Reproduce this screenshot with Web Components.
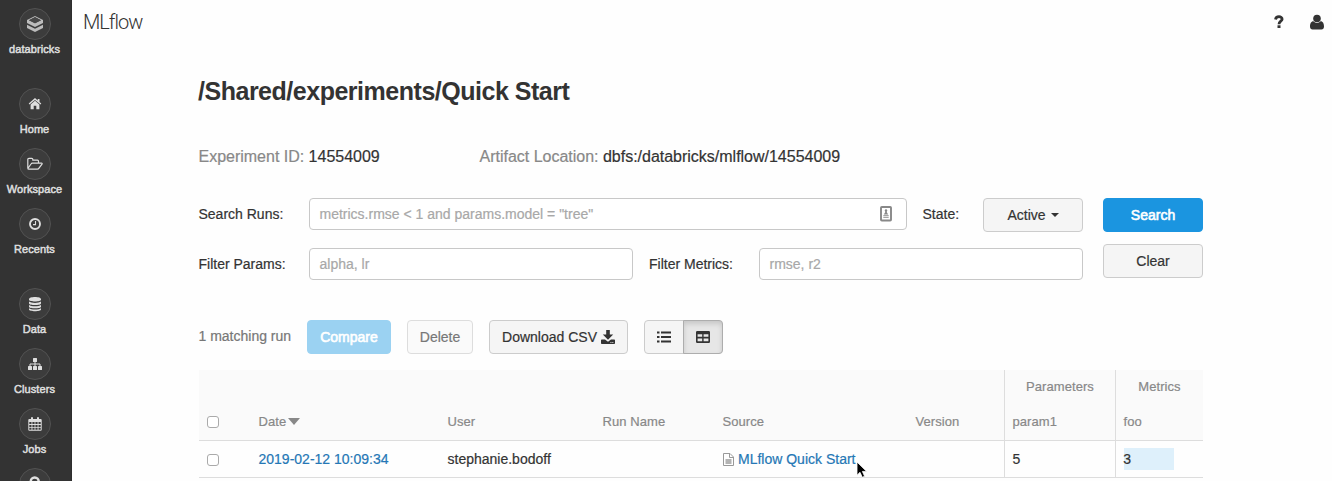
<!DOCTYPE html>
<html lang="en">
<head>
<meta charset="utf-8">
<title>MLflow</title>
<style>
html, body { margin: 0; height: 481px; overflow: hidden; background: #fefefe; }
body { font-family: "Liberation Sans", Arial, sans-serif; font-size: 14px; color: #333; -webkit-text-stroke-width: .2px; }
</style>
</head>
<body>
<ml-app></ml-app>
<script>
const icons = {
  bricks: ['0 0 18 18', '<path fill="#bcbcbc" fill-rule="evenodd" d="M9 1 17 5.1V8.1L9 12.1 1 8.1V5.1ZM9 2.2 3 5.3 9 8.3 15 5.3Z"/><path fill="#bcbcbc" d="M1 9.7 9 13.7 17 9.7V12.9L9 17 1 12.9Z"/><path fill="#484848" d="M9 2.1 3 5.200 9 8.200 15 5.200Z"/>'],
  home: ['0 0 14 14', '<path d="M7 1 .7 6.6l.8.9L7 2.9l5.5 4.6.8-.9L11.5 5V1.9H9.7v1.5Z"/><path d="M2.6 7.5 7 3.8l4.4 3.7v4.7H8.3V8.700H5.700v3.500H2.600Z"/>'],
  folder: ['0 0 18 14', '<path fill="none" stroke="currentColor" stroke-width="1.2" stroke-linejoin="round" d="M1.8 10.9V2.4q0-1.1 1.1-1.1h2.9q1 0 1 1v.9h4.7q1 0 1 1v1.6M1.9 11.5 5 7q.5-.8 1.4-.8h9.1q1 0 .5.9L13 11.2q-.6.9-1.5.9H2.6q-1 0-.7-.7Z"/>'],
  clock: ['0 0 14 14', '<circle cx="7" cy="7" r="5" fill="none" stroke="currentColor" stroke-width="1.9"/><path fill="none" stroke="currentColor" stroke-width="1.1" d="M7.5 4v3.600H5"/>'],
  data: ['0 0 14 16', '<path d="M1 3.1C1 .2 13 .2 13 3.1v1C13 6 1 6 1 4.1ZM1 5.6c2 1.7 10 1.7 12 0v1.9c0 2-12 2-12 0ZM1 9c2 1.7 10 1.7 12 0v1.8c0 2-12 2-12 0ZM1 12.2c2 1.7 10 1.7 12 0v1.2c0 2.3-12 2.3-12 0Z"/>'],
  clusters: ['0 0 16 14', '<rect x="6" y="1" width="4" height="4" rx=".5"/><rect x="1" y="9" width="4" height="4" rx=".5"/><rect x="6" y="9" width="4" height="4" rx=".5"/><rect x="11" y="9" width="4" height="4" rx=".5"/><path fill="none" stroke="currentColor" d="M8 5v4M3 9V7h10v2"/>'],
  calendar: ['0 0 16 16', '<path fill-rule="evenodd" d="M2.3 3H4v-1q0-1 1-1t1 1v1h4v-1q0-1 1-1t1 1v1h1.7q1 0 1 1v9.7q0 1-1 1H2.3q-1 0-1-1V4q0-1 1-1ZM2.3 6v2h2.2V6Zm3.1 0v2h2.2V6Zm3 0v2h2.2V6Zm3.1 0v2h2.2V6ZM2.3 8.9v2h2.2v-2Zm3.1 0v2h2.2v-2Zm3 0v2h2.2v-2Zm3.1 0v2h2.2v-2ZM2.3 11.8v2h2.2v-2Zm3.1 0v2h2.2v-2Zm3 0v2h2.2v-2Zm3.1 0v2h2.2v-2Z"/>'],
  search: ['0 0 16 16', '<circle cx="7.700" cy="5.500" r="4" fill="none" stroke="currentColor" stroke-width="2.4"/><path stroke="currentColor" stroke-width="2.4" d="m11 9 4 4"/>'],
  question: ['0 0 10 14', '<path fill="none" stroke="currentColor" stroke-width="2.8" d="M1.5 4.5C2 .8 8.100.9 8.100 4.200 8.100 6.300 5 6.200 5 9.200"/><rect x="3.500" y="10.300" width="3" height="2.700"/>'],
  user: ['0 0 14 16', '<circle cx="7" cy="4.500" r="3.800"/><path d="M3.400 7.200C1 7.200 0 9.700 0 12.600 0 14.500 1 15.500 2.500 15.500h9c1.500 0 2.500-1 2.500-2.900 0-2.900-1-5.400-3.400-5.400Q9 9 7 9T3.400 7.200Z"/>'],
  contact: ['0 0 12 16', '<rect x="1" y="1" width="10" height="13.500" rx=".8" fill="none" stroke="currentColor" stroke-width="1.9"/><circle cx="6" cy="4.400" r="1.200"/><path d="M5.200 5h1.600v1.300L8.200 8.500H3.800l1.400-2.200ZM3.300 9.300h5.400v.9H3.300Zm0 1.600h5.400v.9H3.300Z"/>'],
  caret: ['0 0 8 4', '<path d="M0 0h8L4 4Z"/>'],
  sort: ['0 0 12 7', '<path d="M0 0h12L6 7Z"/>'],
  download: ['0 0 14 14', '<path d="M5.200 0h3.600v4.600h3.400L7 9.800 1.800 4.600h3.400Z"/><path fill-rule="evenodd" d="M.8 9.500H4l3 2.300L10 9.500h3.200q.8 0 .8.800v2.900q0 .8-.8.800H.800q-.8 0-.8-.8V10.300Q0 9.500.8 9.500ZM9.500 12v.9h.9V12Zm1.900 0v.9h.9V12Z"/>'],
  list: ['0 0 14 12', '<path d="M0 .5h2.500v2H0Zm4 0h10v2H4ZM0 5h2.500v2H0Zm4 0h10v2H4ZM0 9.500h2.500v2H0Zm4 0h10v2H4Z"/>'],
  table: ['0 0 14 12', '<path fill-rule="evenodd" d="M1.200 0h11.600Q14 0 14 1.200v9.600q0 1.200-1.200 1.200H1.200Q0 12 0 10.800V1.200Q0 0 1.200 0ZM1.600 3.200v2.600h4.600V3.200Zm6 0v2.600h4.800V3.200Zm-6 4.200v2.800h4.600V7.400Zm6 0v2.800h4.800V7.400Z"/>'],
  file: ['0 0 11 13', '<path fill="none" stroke="currentColor" d="M1 .5h6L10.500 4v8.500H.5V.5ZM6.500.5v4h4"/><path d="M2.500 6h6v5h-6Z" opacity=".75"/>'],
  cursor: ['0 0 12 18', '<path fill="#000" stroke="#fff" stroke-width=".8" d="M1 1v13.200l3-2.900 2.300 5 2.300-1-2.200-4.900h4.200Z"/>']
};

const define = (name, css, html) => customElements.define(name, class extends HTMLElement {
  constructor() {
    super();
    const t = document.createElement('template');
    t.innerHTML = `<style>*{box-sizing:border-box}${css}</style>${html}`;
    this.attachShadow({ mode: 'open' }).append(t.content.cloneNode(true));
  }
});

customElements.define('ui-icon', class extends HTMLElement {
  connectedCallback() {
    if (this.shadowRoot) return;
    const [box, body] = icons[this.getAttribute('name')];
    const [, , vw, vh] = box.split(' ');
    const w = this.getAttribute('w') || vw, h = this.getAttribute('h') || vh;
    this.attachShadow({ mode: 'open' }).innerHTML =
      `<style>:host{display:inline-block;flex:none;width:${w}px;height:${h}px}svg{display:block;width:100%;height:100%}</style>
       <svg viewBox="${box}" fill="currentColor" preserveAspectRatio="none">${body}</svg>`;
  }
});

define('nav-item', `
  :host{display:flex;flex-direction:column;align-items:center;height:60px;flex:none;color:#dedede}
  .disc{display:grid;place-items:center;width:32px;height:32px;border-radius:50%;border:1px solid #525252;background:#3c3c3c}
  .label{font-size:11px;line-height:14px;margin-top:2px;white-space:nowrap;-webkit-text-stroke:.5px #dedede;letter-spacing:.08px}`,
  `<div class="disc"><slot name="icon"></slot></div><div class="label"><slot></slot></div>`);

define('side-nav', `
  :host{display:flex;flex-direction:column;gap:20px;width:72px;height:481px;padding:8px 2px 0 0;background:#333;overflow:hidden;border-right:1px solid #2d2d2d}
  section{flex:none}`,
  `<section><nav-item><ui-icon slot="icon" name="bricks"></ui-icon>databricks</nav-item></section>
   <section>
    <nav-item><ui-icon slot="icon" name="home"></ui-icon>Home</nav-item>
    <nav-item><ui-icon slot="icon" name="folder"></ui-icon>Workspace</nav-item>
    <nav-item><ui-icon slot="icon" name="clock"></ui-icon>Recents</nav-item>
   </section>
   <section>
    <nav-item><ui-icon slot="icon" name="data"></ui-icon>Data</nav-item>
    <nav-item><ui-icon slot="icon" name="clusters"></ui-icon>Clusters</nav-item>
    <nav-item><ui-icon slot="icon" name="calendar"></ui-icon>Jobs</nav-item>
    <nav-item><ui-icon slot="icon" name="search"></ui-icon></nav-item>
   </section>`);

define('top-bar', `
  :host{display:flex;align-items:center;height:44px;padding:0 8px 0 11px;color:#333}
  .brand{font:300 20px/24px Roboto,"Liberation Sans",sans-serif;letter-spacing:-1px;-webkit-text-stroke-width:0;flex:1;color:#333}
  .actions{display:flex;align-items:center;gap:26px}`,
  `<div class="brand">MLflow</div><div class="actions"><ui-icon name="question"></ui-icon><ui-icon name="user"></ui-icon></div>`);

define('ui-button', `
  :host{display:flex;align-items:center;justify-content:center;gap:5px;height:34px;width:100px;border:1px solid #ccc;border-radius:4px;background:#f5f5f5;color:#333;line-height:20px;white-space:nowrap;flex:none}
  :host([primary]){background:#1b95e0;border-color:#1b95e0;color:#fff;-webkit-text-stroke:.6px #fff}
  :host([disabled]){border-color:#ddd;background:#fafafa;color:#777}
  :host([primary][disabled]){background:#9bd2f2;border-color:#9bd2f2;color:#fff}`,
  `<slot></slot>`);

define('text-field', `
  :host{display:flex;align-items:center;justify-content:space-between;height:32px;padding:0 14px 0 9.5px;border:1px solid #c8c8c8;border-radius:4px;background:#fff;color:#a8a8a8;line-height:20px;flex:none;white-space:nowrap}
  ::slotted(ui-icon){color:#888}`,
  `<slot></slot><slot name="end"></slot>`);

define('view-toggle', `
  :host{display:flex;width:79px;height:34px;border:1px solid #ccc;border-radius:4px;background:#f5f5f5}
  span{display:grid;place-items:center;width:39px;padding-right:1px;color:#333;flex:none}
  .on{width:40px;margin:-1px;padding:0;border:1px solid #adadad;border-radius:0 4px 4px 0;background:#e6e6e6;box-shadow:inset 0 3px 5px #0002;height:34px}`,
  `<span><ui-icon name="list"></ui-icon></span><span class="on"><ui-icon name="table"></ui-icon></span>`);

define('check-box', `:host{display:block;width:12px;height:12px;border:1px solid #aaa;border-radius:3px;background:#fff}`, ``);

define('experiment-info', `
  :host{display:block}
  h1{font-size:25px;line-height:30px;font-weight:700;margin:0 0 0 -1px;letter-spacing:-.48px;-webkit-text-stroke-width:0;white-space:nowrap}
  .meta{display:grid;grid-template-columns:281px 1fr;font-size:16px;line-height:20px;margin:41px 0 0 -.5px;white-space:nowrap;letter-spacing:-.01px}
  b{font-weight:400;color:#888}`,
  `<h1>/Shared/experiments/Quick Start</h1>
   <div class="meta"><div><b>Experiment ID:</b> 14554009</div><div><b>Artifact Location:</b> dbfs:/databricks/mlflow/14554009</div></div>`);

define('search-form', `
  :host{display:flex;gap:20px;margin-top:31px}
  .rows{width:884px;display:flex;flex-direction:column;gap:16px}
  .row{display:flex;height:34px}
  label{line-height:32px;flex:none;white-space:nowrap;text-indent:-.5px}
  .a{width:110px}.s{width:60px;margin-left:16px}.m{width:110px;margin-left:16px;text-indent:0}
  .q{width:598px}.f{width:324px}
  .buttons{display:flex;flex-direction:column;gap:12px}`,
  `<div class="rows">
    <div class="row"><label class="a">Search Runs:</label><text-field class="q">metrics.rmse &lt; 1 and params.model = "tree"<ui-icon slot="end" name="contact"></ui-icon></text-field><label class="s">State:</label><ui-button>Active <ui-icon name="caret"></ui-icon></ui-button></div>
    <div class="row"><label class="a">Filter Params:</label><text-field class="f">alpha, lr</text-field><label class="m">Filter Metrics:</label><text-field class="f">rmse, r2</text-field></div>
   </div>
   <div class="buttons"><ui-button primary>Search</ui-button><ui-button>Clear</ui-button></div>`);

define('run-actions', `
  :host{display:flex;gap:16px;margin-top:38px}
  .count{width:92px;line-height:32px;color:#777;white-space:nowrap;text-indent:-.5px}
  .c{width:84px}.d{width:66px}.w{width:139px;gap:4px}`,
  `<div class="count">1 matching run</div><ui-button class="c" primary disabled>Compare</ui-button><ui-button class="d" disabled>Delete</ui-button><ui-button class="w">Download CSV<ui-icon name="download"></ui-icon></ui-button><view-toggle></view-toggle>`);

define('runs-table', `
  :host{display:block;margin-top:16px;width:1004px}
  .r{display:grid;grid-template-columns:51px 189px 155px 120px 193px 97px 111px 88px;white-space:nowrap}
  .r>div{padding-left:8.5px;display:flex;align-items:center}
  .r>div:first-child{padding-left:8px}
  .r>div:nth-child(n+7){border-left:1px solid #ddd;padding-left:7.5px}
  .h{background:#fafafa;color:#888;font-size:13px;letter-spacing:.07px}
  .g{height:33px}.n{height:38px;border-bottom:1px solid #ddd}
  .g>div:nth-child(n+7){justify-content:center;padding:0!important}
  .v{height:37px;border-bottom:1px solid #ddd}
  .link{color:#2577b5}
  .src{gap:4px}.r>.src{padding-left:9px}.src ui-icon{color:#999}
  .bar{width:50px;height:22px;line-height:22px;background:#def0fb;margin-left:.5px;text-indent:-.7px}
  check-box{margin-top:1px}`,
  `<div class="r h g"><div></div><div></div><div></div><div></div><div></div><div></div><div>Parameters</div><div>Metrics</div></div>
   <div class="r h n"><div><check-box></check-box></div><div>Date<ui-icon name="sort" style="margin-left:2px"></ui-icon></div><div>User</div><div>Run Name</div><div>Source</div><div>Version</div><div>param1</div><div>foo</div></div>
   <div class="r v"><div><check-box></check-box></div><div class="link">2019-02-12 10:09:34</div><div>stephanie.bodoff</div><div></div><div class="src"><ui-icon name="file"></ui-icon><span class="link">MLflow Quick Start</span></div><div></div><div>5</div><div><span class="bar">3</span></div></div>`);

define('ml-app', `
  :host{display:flex;height:481px;position:relative}
  main{flex:1;min-width:0}
  .content{width:1005px;margin:32px 0 0 127px}
  .pointer{position:absolute;left:856px;top:461px}`,
  `<side-nav></side-nav>
   <main><top-bar></top-bar><div class="content"><experiment-info></experiment-info><search-form></search-form><run-actions></run-actions><runs-table></runs-table></div></main>
   <ui-icon class="pointer" name="cursor"></ui-icon>`);
</script>
</body>
</html>
